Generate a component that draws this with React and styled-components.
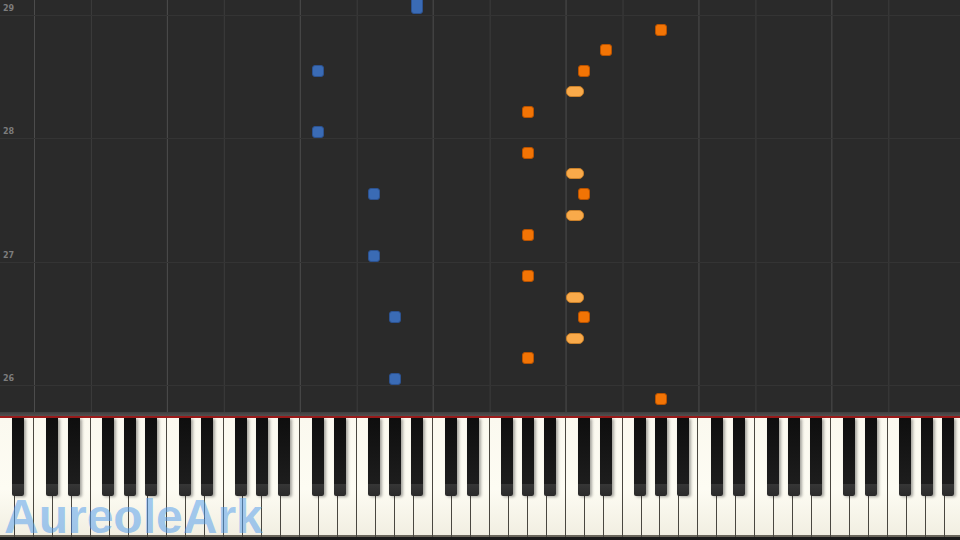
import React from "react"
import styled, { createGlobalStyle } from "styled-components"

const OCTAVE = 132.9
const WHITE = OCTAVE / 7
const FIRST_C = 34
const BLACK_OFFSETS = { "C#": 12, "D#": 34, "F#": 68, "G#": 89.5, "A#": 111 }

const keyX = (name, octave) => {
  const base = FIRST_C + octave * OCTAVE
  if (name === "C") return base
  return base + BLACK_OFFSETS[name]
}

const notes = [
  { key: "A#", oct: 2, y: -8, h: 22, kind: "blue" },
  { key: "C#", oct: 2, y: 71, kind: "blue" },
  { key: "C#", oct: 2, y: 132, kind: "blue" },
  { key: "F#", oct: 2, y: 194, kind: "blue" },
  { key: "F#", oct: 2, y: 256, kind: "blue" },
  { key: "G#", oct: 2, y: 317, kind: "blue" },
  { key: "G#", oct: 2, y: 379, kind: "blue" },
  { key: "G#", oct: 4, y: 30, kind: "dark" },
  { key: "D#", oct: 4, y: 50, kind: "dark" },
  { key: "C#", oct: 4, y: 71, kind: "dark" },
  { key: "C", oct: 4, y: 91, kind: "light" },
  { key: "G#", oct: 3, y: 112, kind: "dark" },
  { key: "G#", oct: 3, y: 153, kind: "dark" },
  { key: "C", oct: 4, y: 173, kind: "light" },
  { key: "C#", oct: 4, y: 194, kind: "dark" },
  { key: "C", oct: 4, y: 215, kind: "light" },
  { key: "G#", oct: 3, y: 235, kind: "dark" },
  { key: "G#", oct: 3, y: 276, kind: "dark" },
  { key: "C", oct: 4, y: 297, kind: "light" },
  { key: "C#", oct: 4, y: 317, kind: "dark" },
  { key: "C", oct: 4, y: 338, kind: "light" },
  { key: "G#", oct: 3, y: 358, kind: "dark" },
  { key: "G#", oct: 4, y: 399, kind: "dark" },
]

const measures = [
  { label: "29", height: 15.5 },
  { label: "28", height: 123.5 },
  { label: "27", height: 123.5 },
  { label: "26", height: 123.5 },
  { label: "", height: 0, fill: true },
]

const whiteCount = 51
const blackKeys = []
for (let oct = -1; oct <= 6; oct++) {
  Object.keys(BLACK_OFFSETS).forEach((name) => {
    const x = keyX(name, oct)
    if (x >= 0 && x < 960) blackKeys.push({ name, oct, x })
  })
}

const GlobalStyle = createGlobalStyle`
  html, body {
    margin: 0;
    padding: 0;
    background: #2a2a2a;
  }
  #root {
    width: 960px;
    height: 540px;
  }
`

const Page = styled.div`
  position: relative;
  width: 960px;
  height: 540px;
  display: flex;
  flex-direction: column;
  overflow: hidden;
  background: #1e1e1e;
`

const Roll = styled.div`
  position: relative;
  height: 412px;
  flex: 0 0 412px;
  display: flex;
  flex-direction: column;
  background-color: #2a2a2a;
  background-image: linear-gradient(
    to right,
    #4c4c4c 0,
    #4c4c4c 1px,
    transparent 1px,
    transparent ${3 * WHITE}px,
    #3b3b3b ${3 * WHITE}px,
    #3b3b3b ${3 * WHITE + 1}px,
    transparent ${3 * WHITE + 1}px
  );
  background-size: ${OCTAVE}px 100%;
  background-position: ${FIRST_C}px 0;
  overflow: hidden;
`

const Measure = styled.div`
  box-sizing: border-box;
  flex: ${(p) => (p.$fill ? "1 1 auto" : `0 0 ${p.$height}px`)};
  display: flex;
  align-items: flex-end;
  padding: 0 0 2px 3px;
  border-bottom: ${(p) => (p.$fill ? "none" : "1px solid #343434")};
`

const Label = styled.span`
  font-family: "DejaVu Sans", sans-serif;
  font-size: 8px;
  font-weight: bold;
  line-height: 8px;
  color: #7c7c7c;
`

const noteColors = {
  blue: { bg: "#3a6bb5", border: "#2c5290" },
  dark: { bg: "#f27405", border: "#b85200" },
  light: { bg: "#f9aa4a", border: "#c9802a" },
}

const Note = styled.div`
  position: absolute;
  box-sizing: border-box;
  width: ${(p) => (p.$kind === "light" ? 18 : 12)}px;
  border-radius: ${(p) => (p.$kind === "light" ? 5 : 3)}px;
  background: ${(p) => noteColors[p.$kind].bg};
  border: 1px solid ${(p) => noteColors[p.$kind].border};
`

const Bezel = styled.div`
  flex: 0 0 4px;
  background: linear-gradient(to bottom, #3e3e3e, #505050);
`

const RedLine = styled.div`
  flex: 0 0 2px;
  background: #9b1b1b;
`

const Keyboard = styled.div`
  position: relative;
  flex: 0 0 119px;
  display: flex;
  background: #222;
`

const WhiteRow = styled.div`
  display: flex;
  margin-left: ${FIRST_C - 2 * WHITE}px;
`

const WhiteKey = styled.div`
  box-sizing: border-box;
  flex: 0 0 ${WHITE}px;
  height: 119px;
  border-right: 1px solid #4a4740;
  background: linear-gradient(to bottom, #fbf9ef 0%, #fdfcf3 60%, #f1eee1 100%);
  box-shadow: inset 0 -2px 0 #6b675c;
`

const BlackKey = styled.div`
  position: absolute;
  top: 0;
  width: 12px;
  height: 78px;
  border-radius: 0 0 2px 2px;
  background: linear-gradient(
    to bottom,
    #0e0e0e 0%,
    #1d1d1d 84%,
    #363636 85%,
    #2a2a2a 100%
  );
  box-shadow: 2px 1px 3px rgba(0, 0, 0, 0.35);
`

const Watermark = styled.div`
  position: absolute;
  left: 4px;
  top: 81px;
  font-family: "Liberation Sans", Arial, sans-serif;
  font-weight: bold;
  font-size: 48px;
  line-height: 36px;
  color: rgba(86, 160, 238, 0.55);
  pointer-events: none;
`

const BottomEdge = styled.div`
  flex: 1 1 auto;
  background: #1a1a1a;
`

const App = () => {
  return (
    <>
      <GlobalStyle />
      <Page>
        <Roll>
          {measures.map((m, i) => (
            <Measure key={i} $height={m.height} $fill={m.fill}>
              {m.label && <Label>{m.label}</Label>}
            </Measure>
          ))}
          {notes.map((n, i) => {
            const light = n.kind === "light"
            const left = keyX(n.key, n.oct) + (light ? 0.5 : 0)
            const h = n.h || (light ? 11 : 12)
            const top = n.h ? n.y : n.y - h / 2
            return (
              <Note
                key={i}
                $kind={n.kind}
                style={{ left: `${left}px`, top: `${top}px`, height: `${h}px` }}
              />
            )
          })}
        </Roll>
        <Bezel />
        <RedLine />
        <Keyboard>
          <WhiteRow>
            {Array.from({ length: whiteCount }).map((_, i) => (
              <WhiteKey key={i} />
            ))}
          </WhiteRow>
          {blackKeys.map((b) => (
            <BlackKey key={`${b.name}${b.oct}`} style={{ left: `${b.x}px` }} />
          ))}
          <Watermark>AureoleArk</Watermark>
        </Keyboard>
        <BottomEdge />
      </Page>
    </>
  )
}

export default App
